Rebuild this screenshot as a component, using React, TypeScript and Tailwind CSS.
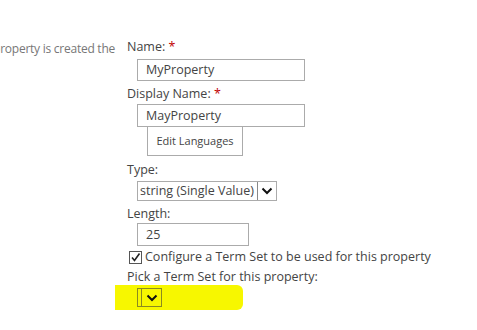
import React from 'react';

const Chevron = () => (
  <svg width="12" height="8" viewBox="0 0 12 8">
    <path d="M1.5 1.5 L6 6 L10.5 1.5" fill="none" stroke="#111" strokeWidth="2" />
  </svg>
);

const App = () => {
  return (
    <div className="w-[477px] h-[330px] bg-white overflow-hidden text-[12.5px] text-[#444] font-['Open_Sans',sans-serif] whitespace-nowrap">
      <div className="flex pt-[38px]">
        <div className="w-[127px] shrink-0 text-[#777] flex justify-end pr-[12px]">
          <p className="mt-[2px] text-[12px] tracking-[-0.25px]">property is created the</p>
        </div>
        <div className="flex flex-col">
          <label className="leading-[18px]">
            Name: <span className="text-[#bf0000]">*</span>
          </label>
          <div className="ml-[10px] mt-[3px] w-[168px] h-[22px] border border-[#ababab] px-[8px] leading-[20px]">
            MyProperty
          </div>
          <label className="mt-[4px] leading-[18px]">
            Display Name: <span className="text-[#bf0000]">*</span>
          </label>
          <div className="ml-[10px] mt-[1px] w-[168px] h-[23px] border border-[#ababab] px-[8px] leading-[21px]">
            MayProperty
          </div>
          <button className="ml-[20px] w-[96px] h-[29px] border border-t-0 border-[#ababab] text-[11px] text-[#444] bg-white pt-[1px]">
            Edit Languages
          </button>
          <label className="mt-[5px] leading-[18px]">Type:</label>
          <div className="ml-[10px] mt-[2px] flex h-[20px] w-[140px] border border-[#ababab] leading-[18px]">
            <span className="flex-1 pl-[2px]">string (Single Value)</span>
            <span className="w-[19px] flex items-center justify-center border-l border-[#888]">
              <Chevron />
            </span>
          </div>
          <label className="mt-[4px] leading-[18px]">Length:</label>
          <div className="ml-[10px] w-[112px] h-[23px] border border-[#ababab] px-[8px] leading-[21px]">
            25
          </div>
          <div className="mt-[3px] ml-[2px] flex items-center gap-[3px] leading-[16px]">
            <span className="w-[13px] h-[13px] border border-[#555] flex items-center justify-center">
              <svg width="11" height="11" viewBox="0 0 11 11">
                <path d="M2 5.5 L4.5 8.5 L9.5 1.5" fill="none" stroke="#222" strokeWidth="1.6" />
              </svg>
            </span>
            <span>Configure a Term Set to be used for this property</span>
          </div>
          <label className="mt-[3px] leading-[18px]">Pick a Term Set for this property:</label>
          <div className="-ml-[12px] -mt-[1px] w-[128px] h-[25px] bg-[#f7f700] rounded-r-[6px] flex items-center">
            <div className="ml-[22px] flex h-[19px] border border-[#8a8a20]">
              <span className="w-[4px] border-r border-[#8a8a20]" />
              <span className="w-[19px] flex items-center justify-center">
                <Chevron />
              </span>
            </div>
          </div>
        </div>
      </div>
    </div>
  );
};

export default App;
